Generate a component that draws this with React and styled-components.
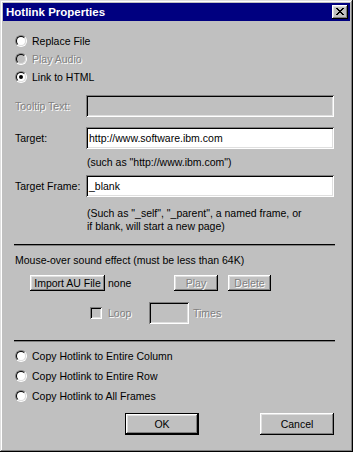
import React from "react";
import styled, { createGlobalStyle, css } from "styled-components";

const Global = createGlobalStyle`
  body {
    margin: 0;
    background: #c0c0c0;
  }
`;

const raised = css`
  box-shadow: inset -1px -1px #000, inset 1px 1px #fff, inset -2px -2px #808080, inset 2px 2px #dfdfdf;
`;

const sunken = css`
  box-shadow: inset 1px 1px #808080, inset -1px -1px #fff, inset 2px 2px #000, inset -2px -2px #dfdfdf;
`;

const dimText = css`
  color: #808080;
  text-shadow: 1px 1px 0 #fff;
`;

const Window = styled.div`
  width: 353px;
  height: 452px;
  box-sizing: border-box;
  padding: 3px;
  background: #c0c0c0;
  box-shadow: inset -1px -1px #000, inset 1px 1px #dfdfdf, inset -2px -2px #808080, inset 2px 2px #fff;
  font-family: "Liberation Sans", Arial, sans-serif;
  font-size: 10.5px;
  color: #000;
  display: flex;
  flex-direction: column;
`;

const TitleBar = styled.div`
  height: 18px;
  background: #000080;
  color: #fff;
  font-weight: bold;
  font-size: 11.5px;
  display: flex;
  align-items: center;
  justify-content: space-between;
  padding: 0 2px 0 3px;
`;

const CloseButton = styled.div`
  width: 16px;
  height: 14px;
  background: #c0c0c0;
  ${raised};
  display: flex;
  align-items: center;
  justify-content: center;
  svg {
    margin: -1px 0 0 -1px;
  }
`;

const Body = styled.div`
  padding: 0 16px 0 12px;
  display: flex;
  flex-direction: column;
`;

const RadioGroup = styled.div`
  display: flex;
  flex-direction: column;
  margin-top: ${(p) => p.$top}px;
`;

const RadioRow = styled.label`
  height: ${(p) => p.$h}px;
  display: flex;
  align-items: center;
  gap: 5px;
  ${(p) => p.$disabled && dimText};
`;

const RadioDot = styled.span`
  position: relative;
  width: 12px;
  height: 12px;
  box-sizing: border-box;
  border-radius: 50%;
  border: 1px solid;
  border-color: #808080 #fff #fff #808080;
  flex: none;
  &::before {
    content: "";
    position: absolute;
    inset: 0;
    border-radius: 50%;
    border: 1px solid;
    border-color: #000 #dfdfdf #dfdfdf #000;
    background: ${(p) => (p.$disabled ? "#c0c0c0" : "#fff")};
  }
  &::after {
    content: "";
    display: ${(p) => (p.$checked ? "block" : "none")};
    position: absolute;
    left: 3px;
    top: 3px;
    width: 4px;
    height: 4px;
    border-radius: 50%;
    background: #000;
  }
`;

const FieldRow = styled.div`
  height: 22px;
  display: flex;
  align-items: center;
  margin-top: ${(p) => p.$top}px;
`;

const FieldLabel = styled.span`
  width: 71px;
  flex: none;
  ${(p) => p.$disabled && dimText};
`;

const TextBox = styled.div`
  height: 22px;
  box-sizing: border-box;
  padding: 0 3px;
  display: flex;
  align-items: center;
  background: ${(p) => (p.$disabled ? "#c0c0c0" : "#fff")};
  ${sunken};
  width: ${(p) => (p.$w ? `${p.$w}px` : "auto")};
  flex: ${(p) => (p.$w ? "none" : "1")};
`;

const Hint = styled.div`
  margin: ${(p) => p.$top}px 0 0 72px;
  line-height: 13px;
`;

const Separator = styled.div`
  margin: ${(p) => p.$top}px -1px 0;
  border-top: 1px solid #000;
  border-bottom: 1px solid #808080;
`;

const Caption = styled.div`
  margin-top: 8px;
  line-height: 13px;
`;

const ButtonRow = styled.div`
  display: flex;
  align-items: center;
  margin-top: ${(p) => p.$top}px;
  padding-left: ${(p) => p.$indent || 0}px;
  justify-content: ${(p) => p.$justify || "flex-start"};
  gap: ${(p) => p.$gap || 0}px;
`;

const Button = styled.div`
  width: ${(p) => p.$w}px;
  height: ${(p) => p.$h}px;
  margin-left: ${(p) => p.$ml || 0}px;
  box-sizing: border-box;
  background: #c0c0c0;
  display: flex;
  align-items: center;
  justify-content: center;
  flex: none;
  ${raised};
  ${(p) =>
    p.$default &&
    css`
      box-shadow: inset 0 0 0 1px #000, inset -2px -2px #000, inset 2px 2px #fff, inset -3px -3px #808080,
        inset 3px 3px #dfdfdf;
    `};
  ${(p) => p.$disabled && dimText};
`;

const NoneText = styled.span`
  width: 66px;
  margin-left: 3px;
  flex: none;
`;

const LoopRow = styled.div`
  display: flex;
  align-items: center;
  margin: 11px 0 0 75px;
`;

const CheckBox = styled.span`
  width: 12px;
  height: 12px;
  box-sizing: border-box;
  background: #c0c0c0;
  ${sunken};
  flex: none;
`;

const DimLabel = styled.span`
  ${dimText};
  width: ${(p) => (p.$w ? `${p.$w}px` : "auto")};
  margin-left: ${(p) => p.$ml || 0}px;
  flex: none;
`;

function Radio({ label, checked, disabled, h }) {
  return (
    <RadioRow $h={h} $disabled={disabled}>
      <RadioDot $checked={checked} $disabled={disabled} />
      {label}
    </RadioRow>
  );
}

export default function App() {
  return (
    <>
      <Global />
      <Window>
        <TitleBar>
          <span>Hotlink Properties</span>
          <CloseButton>
            <svg width="8" height="7" viewBox="0 0 8 7" shapeRendering="crispEdges">
              <path d="M0 0h2v1H0zM6 0h2v1H6zM1 1h2v1H1zM5 1h2v1H5zM2 2h4v1H2zM3 3h2v1H3zM2 4h4v1H2zM1 5h2v1H1zM5 5h2v1H5zM0 6h2v1H0zM6 6h2v1H6z" fill="#000" />
            </svg>
          </CloseButton>
        </TitleBar>
        <Body>
          <RadioGroup $top={11}>
            <Radio h={18} label="Replace File" />
            <Radio h={18} label="Play Audio" disabled />
            <Radio h={18} label="Link to HTML" checked />
          </RadioGroup>

          <FieldRow $top={9}>
            <FieldLabel $disabled>Tooltip Text:</FieldLabel>
            <TextBox $disabled />
          </FieldRow>
          <FieldRow $top={10}>
            <FieldLabel>Target:</FieldLabel>
            <TextBox>http://www.software.ibm.com</TextBox>
          </FieldRow>
          <Hint $top={7}>(such as "http://www.ibm.com")</Hint>
          <FieldRow $top={6}>
            <FieldLabel>Target Frame:</FieldLabel>
            <TextBox>_blank</TextBox>
          </FieldRow>
          <Hint $top={10}>
            (Such as "_self", "_parent", a named frame, or
            <br />
            if blank, will start a new page)
          </Hint>

          <Separator $top={11} />
          <Caption>Mouse-over sound effect (must be less than 64K)</Caption>
          <ButtonRow $top={8} $indent={15}>
            <Button $w={75} $h={16}>Import AU File</Button>
            <NoneText>none</NoneText>
            <Button $w={44} $h={16} $disabled>Play</Button>
            <Button $w={43} $h={16} $ml={10} $disabled>Delete</Button>
          </ButtonRow>
          <LoopRow>
            <CheckBox />
            <DimLabel $w={41} $ml={6}>Loop</DimLabel>
            <TextBox $w={40} $disabled />
            <DimLabel $ml={4}>Times</DimLabel>
          </LoopRow>

          <Separator $top={16} />
          <RadioGroup $top={4}>
            <Radio h={20} label="Copy Hotlink to Entire Column" />
            <Radio h={20} label="Copy Hotlink to Entire Row" />
            <Radio h={20} label="Copy Hotlink to All Frames" />
          </RadioGroup>

          <ButtonRow $top={7} $justify="flex-end" $gap={61}>
            <Button $w={74} $h={22} $default>OK</Button>
            <Button $w={74} $h={22}>Cancel</Button>
          </ButtonRow>
        </Body>
      </Window>
    </>
  );
}
